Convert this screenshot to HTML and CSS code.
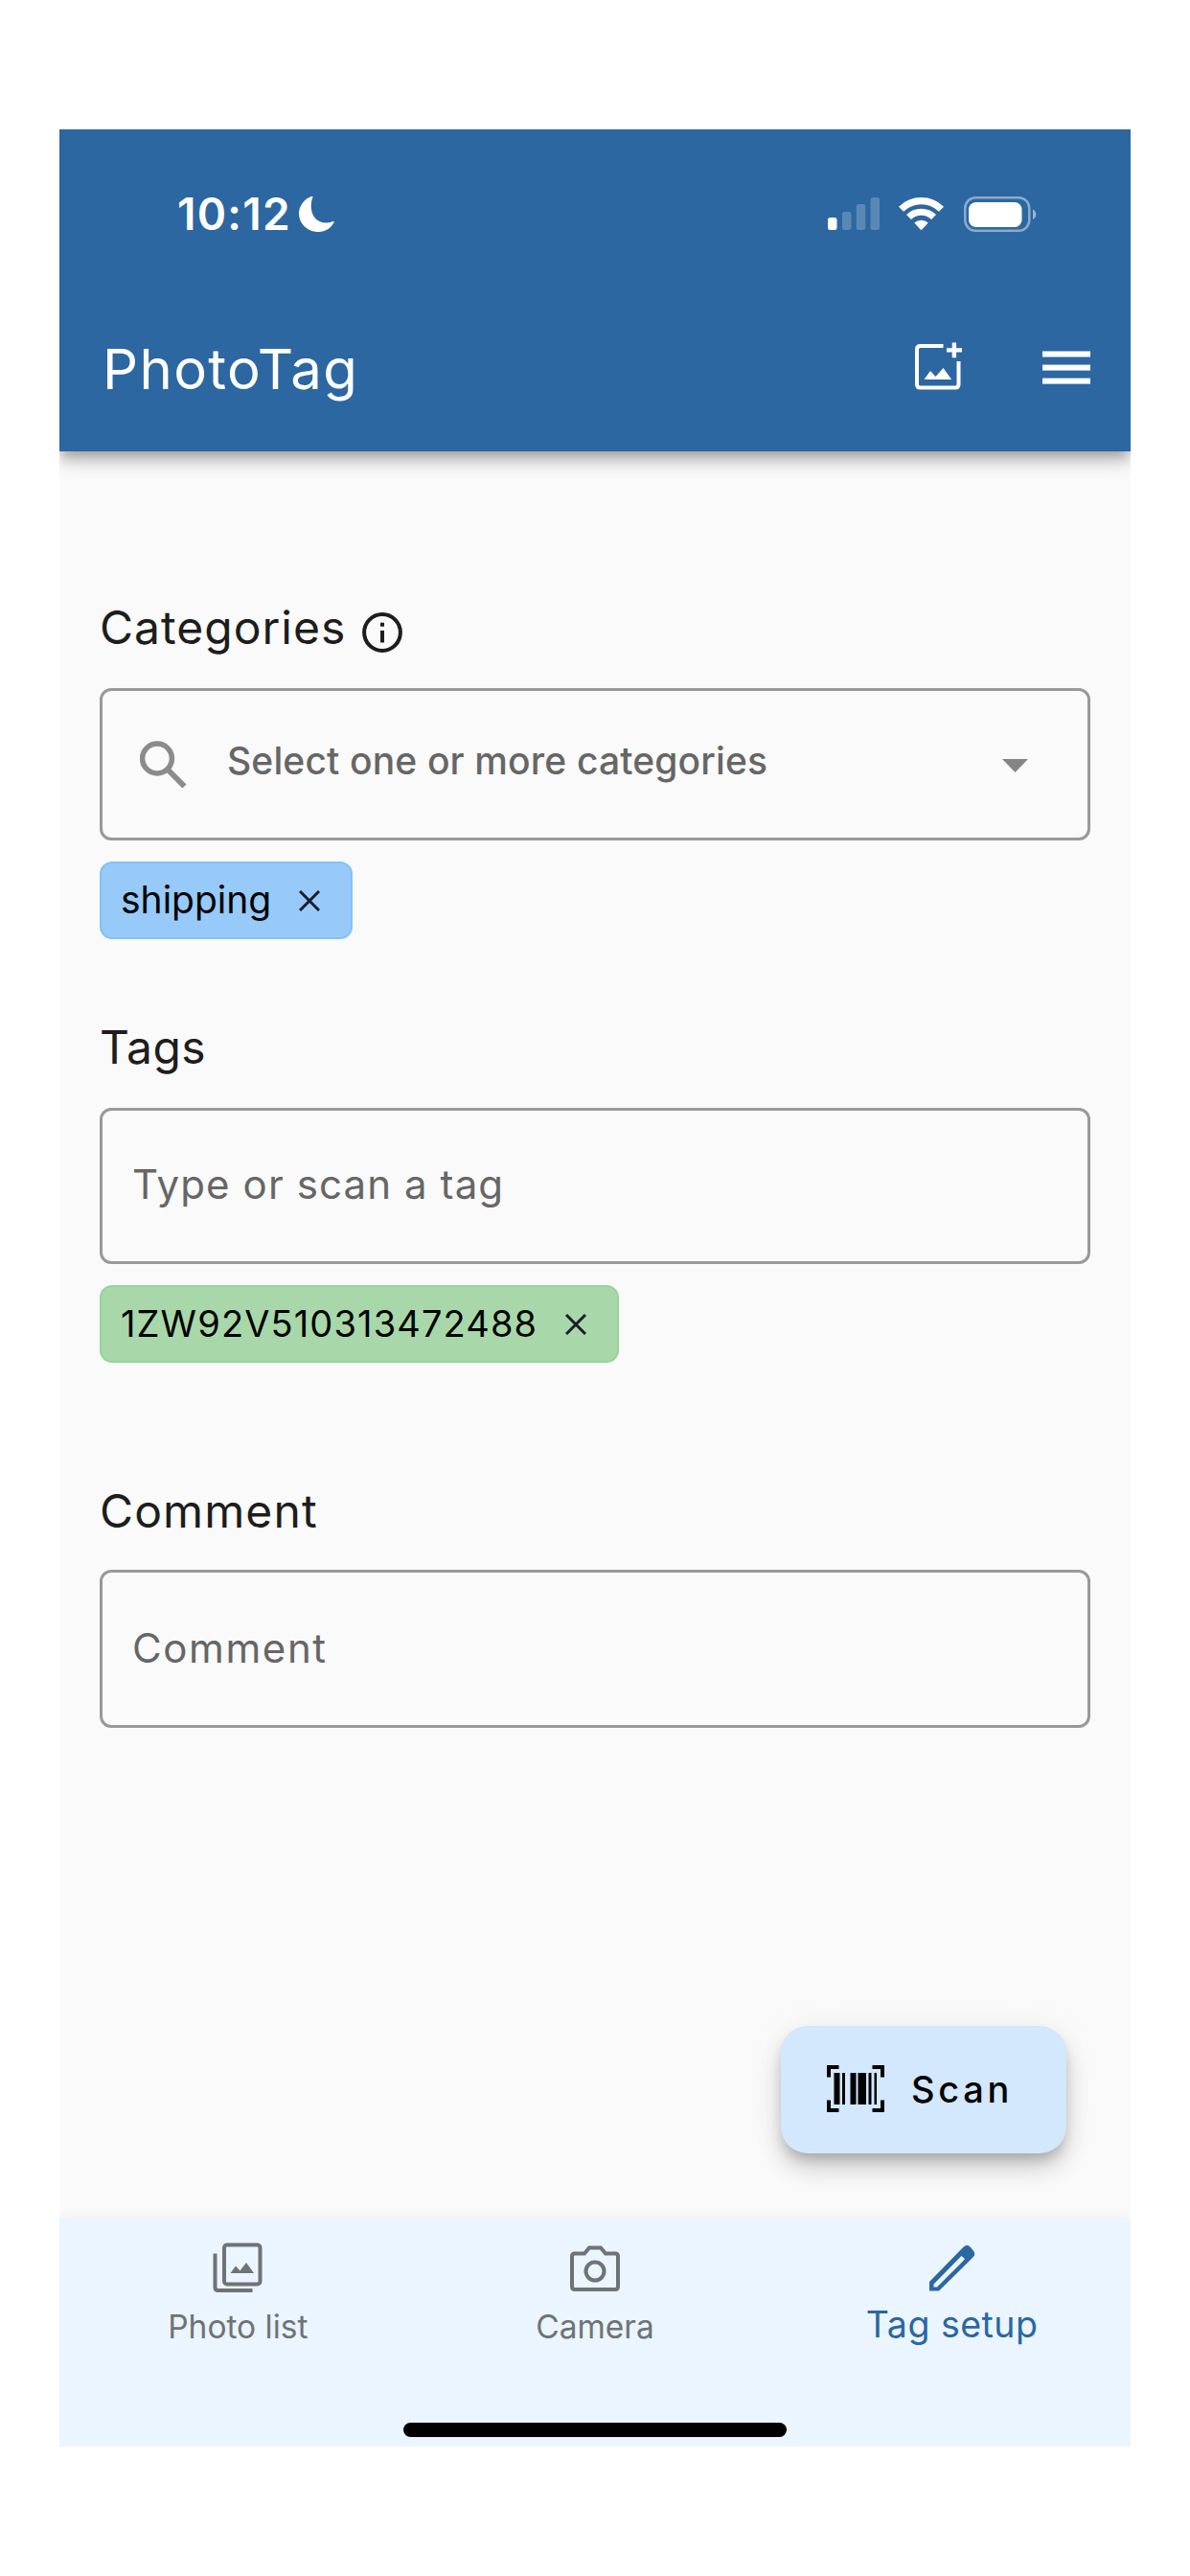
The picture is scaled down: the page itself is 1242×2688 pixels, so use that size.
FILE: index.html
```
<!DOCTYPE html>
<html lang="en">
<head>
    <meta charset="UTF-8">
    <meta name="viewport" content="width=device-width, initial-scale=1.0">
    <title>PhotoTag</title>
    <link rel="stylesheet" href="styles.css">
</head>
<body>
    <div class="phone">
        <header class="app-bar">
            <div class="status-bar">
                <span class="time">10:12</span>
                <svg class="moon" width="37" height="37" viewBox="0 0 37 37">
                    <path d="M14.5 0.6C10 11.5 13.5 27.5 29 27.5C31.5 27.5 33.8 27 35.6 26.1C36.3 25.7 37 26.2 36.600 27C33.6 32.8 27.7 37 20.5 37C9 37 0 28.5 0 17.5C0 10.2 5.5 2.8 12.8 0.1C13.9 -0.2 14.8 -0.2 14.5 0.6Z" fill="#fff"/>
                </svg>
                <div class="status-icons">
                    <svg width="54" height="34" viewBox="0 0 54 34" fill="#fff">
                        <rect x="0" y="21" width="9.5" height="13" rx="2.5"/>
                        <rect x="15" y="15" width="9.5" height="19" rx="2.5" opacity="0.22"/>
                        <rect x="29.7" y="7" width="9.5" height="27" rx="2.5" opacity="0.22"/>
                        <rect x="44.5" y="0" width="9.5" height="34" rx="2.5" opacity="0.22"/>
                    </svg>
                    <svg class="wifi" width="47" height="34" viewBox="0 0 47 34">
                        <path d="M2.5 12.3A30 30 0 0 1 44.5 12.3" fill="none" stroke="#fff" stroke-width="7.2"/>
                        <path d="M10.5 20.5A18.5 18.5 0 0 1 36.5 20.5" fill="none" stroke="#fff" stroke-width="7"/>
                        <path d="M16.3 26.6A10.5 10.5 0 0 1 30.7 26.6L24.3 33.4Q23.5 34.3 22.7 33.4Z" fill="#fff"/>
                    </svg>
                    <svg class="battery" width="76" height="37" viewBox="0 0 76 37">
                        <rect x="1.25" y="1.25" width="67" height="34.5" rx="11" fill="none" stroke="#fff" stroke-width="2.5" opacity="0.45"/>
                        <rect x="5" y="6" width="55.5" height="26" rx="7.5" fill="#fff"/>
                        <path d="M72 13.5C76.5 15.5 76.5 22 72 24Z" fill="#fff" opacity="0.5"/>
                    </svg>
                </div>
            </div>
            <div class="toolbar">
                <h1>PhotoTag</h1>
                <svg class="add-photo" width="50" height="70" viewBox="0 0 50 70" fill="none" stroke="#fff">
                    <path d="M29.5 11H5.5Q2 11 2 14.5V51Q2 54.5 5.5 54.5H42Q45.5 54.5 45.5 51V27" stroke-width="4"/>
                    <path d="M33 15.4H49M40.9 7.5V23.3" stroke-width="4.4"/>
                    <path d="M9.5 46L16 37L21.5 43L29.5 34L38.2 46Z" fill="#fff" stroke="none"/>
                </svg>
                <svg class="menu" width="50" height="70" viewBox="0 0 50 70" fill="#fff">
                    <rect y="16.5" width="50" height="6"/>
                    <rect y="30.6" width="50" height="6"/>
                    <rect y="44.6" width="50" height="6"/>
                </svg>
            </div>
        </header>

        <main>
            <section class="field categories">
                <h2>Categories
                    <svg class="info" width="42" height="42" viewBox="0 0 42 42">
                        <circle cx="21" cy="21" r="18.9" fill="none" stroke="#1d1d1d" stroke-width="4"/>
                        <path d="M21 19V31.5M21 10.8V14.8" stroke="#1d1d1d" stroke-width="4"/>
                    </svg>
                </h2>
                <div class="box select">
                    <svg width="49" height="49" viewBox="0 0 49 49" fill="none" stroke="#8b8b8b">
                        <circle cx="18" cy="18.5" r="15.4" stroke-width="5.5"/>
                        <path d="M29 30L46.5 47.5" stroke-width="5.8"/>
                    </svg>
                    <span>Select one or more categories</span>
                    <svg class="arrow" width="27" height="14" viewBox="0 0 27 14"><path d="M0 0H27L13.5 14Z" fill="#858585"/></svg>
                </div>
                <div class="chip blue">
                    <span>shipping</span>
                    <svg width="22" height="22" viewBox="0 0 22 22"><path d="M1 1L21 21M21 1L1 21" stroke="#1d1b2c" stroke-width="3"/></svg>
                </div>
            </section>

            <section class="field tags">
                <h2>Tags</h2>
                <input class="box" type="text" placeholder="Type or scan a tag">
                <div class="chip green">
                    <span>1ZW92V510313472488</span>
                    <svg width="22" height="22" viewBox="0 0 22 22"><path d="M1 1L21 21M21 1L1 21" stroke="#1d1b2c" stroke-width="3"/></svg>
                </div>
            </section>

            <section class="field comment">
                <h2>Comment</h2>
                <input class="box" type="text" placeholder="Comment">
            </section>
        </main>

        <button class="scan">
            <svg width="60" height="49" viewBox="0 0 60 49">
                <path d="M2 12.5V2H12.5M47.5 2H58V12.5M58 36.5V47H47.5M12.5 47H2V36.5" fill="none" stroke="#000" stroke-width="4"/>
                <path d="M7.5 8H13.5V41H7.5ZM16 8H19V41H16ZM24.5 8H30.5V41H24.5ZM32.5 8H41V41H32.5ZM43.5 8H46.5V41H43.5ZM49.5 8H52V41H49.5Z"/>
            </svg>
            <span>Scan</span>
        </button>

        <nav>
            <a class="tab">
                <svg width="52" height="54" viewBox="0 0 52 54" fill="none" stroke="#6f7376" stroke-width="4">
                    <rect x="12" y="3.5" width="37.5" height="41" rx="3"/>
                    <path d="M2.5 12.5V48Q2.5 51 5.5 51H41.5"/>
                    <path d="M18.5 33L24 25.5L28.5 30.5L35 22L43 33Z" fill="#6f7376" stroke="none"/>
                </svg>
                <span>Photo list</span>
            </a>
            <a class="tab">
                <svg width="54" height="54" viewBox="0 0 54 54" fill="none" stroke="#6f7376" stroke-width="4">
                    <path d="M6 12.5H16L21 6.5H33L38 12.5H48Q51 12.5 51 15.5V47Q51 50 48 50H6Q3 50 3 47V15.5Q3 12.5 6 12.5Z"/>
                    <circle cx="27" cy="31" r="9.5"/>
                </svg>
                <span>Camera</span>
            </a>
            <a class="tab active">
                <svg width="54" height="54" viewBox="0 0 54 54">
                    <path d="M3 51.5V42L38.5 5.800Q42 2.5 45.5 5.500L48.5 9Q52 13 48.5 16.5L13 51.5ZM7.5 47.5H11L36.5 22L40 18.200L38.500 16.700L36.500 15L7.5 44.5Z" fill="#2c67a1" fill-rule="evenodd"/>
                </svg>
                <span>Tag setup</span>
            </a>
            <div class="home-indicator"></div>
        </nav>
    </div>
</body>
</html>
```
FILE: styles.css
```
* {
    box-sizing: border-box;
}

body {
    margin: 0;
    padding: 135px 62px;
    height: 2688px;
    background-color: white;
    font-family: Inter, "Liberation Sans", sans-serif;
}

svg {
    display: block;
    flex-shrink: 0;
}

h1, h2 {
    margin: 0;
    font-weight: 400;
}

.phone {
    position: relative;
    display: flex;
    flex-direction: column;
    width: 1118px;
    height: 2418px;
    overflow: hidden;
    background-color: #fafafa;
}

/* top bar */
.app-bar {
    position: relative;
    height: 336px;
    padding-top: 58px;
    background-color: #2c67a1;
    color: white;
    box-shadow: 0 7px 11px -3px rgba(0,0,0,0.2), 0 12px 15px 0 rgba(0,0,0,0.15), 0 3px 27px rgba(0,0,0,0.1);
}

.status-bar {
    display: flex;
    align-items: center;
    height: 60px;
    padding: 0 98px 0 123px;
}

.time {
    font-size: 46px;
    font-weight: 600;
    line-height: 60px;
    letter-spacing: 1.27px;
}

.moon {
    margin-left: 8px;
}

.status-icons {
    display: flex;
    align-items: center;
    margin-left: auto;
}

.wifi {
    margin: 0 21px 0 20px;
}

.toolbar {
    display: flex;
    height: 70px;
    margin-top: 97px;
    padding: 0 42px 0 45px;
}

.toolbar h1 {
    flex: 1;
    font-size: 58px;
    line-height: 70px;
    letter-spacing: 1.4px;
}

.menu {
    margin-left: 83px;
}

/* form */
main {
    flex: 1;
    padding: 154px 42px 0;
}

.field h2 {
    display: flex;
    align-items: center;
    margin-bottom: 33px;
    font-size: 48px;
    line-height: 60px;
    letter-spacing: 1px;
    color: #1d1d1d;
}

.categories {
    margin-bottom: 83px;
}

.tags {
    margin-bottom: 125px;
}

.tags h2 {
    letter-spacing: 0.5px;
}

.info {
    margin: 10px 0 0 17px;
}

.box {
    display: block;
    width: 100%;
    height: 163px;
    border: 3px solid #999;
    border-radius: 12px;
    background: none;
}

input.box {
    padding: 0 31px 4px;
    font-family: inherit;
    font-size: 42px;
    letter-spacing: 1.1px;
}

.box::placeholder {
    color: #666;
    opacity: 1;
}

.comment h2 {
    margin-bottom: 31px;
    letter-spacing: 1.1px;
}

.comment input.box {
    height: 165px;
    padding-bottom: 2px;
    letter-spacing: 1.6px;
}

.select {
    display: flex;
    align-items: center;
    height: 159px;
    padding: 0 62px 0 39px;
    color: #666;
}

.select span {
    flex: 1;
    margin-left: 42px;
    padding-bottom: 9px;
    font-size: 39px;
    font-weight: 500;
    letter-spacing: 0.14px;
}

.arrow {
    margin-top: 3px;
}

.chip {
    display: inline-flex;
    align-items: center;
    height: 81px;
    margin-top: 22px;
    border: 2px solid;
    border-radius: 13px;
    padding: 0 32px 0 20px;
    font-size: 39px;
    vertical-align: top;
    color: #000;
}

.chip span {
    padding-bottom: 2px;
}

.chip svg {
    margin-left: 29px;
}

.blue {
    background-color: #97caf8;
    border-color: #82c2f8;
}

.green {
    background-color: #a8d8aa;
    border-color: #96d498;
    font-size: 38px;
    letter-spacing: 1.13px;
}

/* floating scan button */
.scan {
    position: absolute;
    right: 67px;
    bottom: 306px;
    display: flex;
    align-items: center;
    width: 298px;
    height: 133px;
    border: none;
    border-radius: 28px;
    padding: 0 0 2px 48px;
    background-color: #d3e7fd;
    color: #000;
    font-family: inherit;
    font-size: 38px;
    font-weight: 500;
    letter-spacing: 3.7px;
    box-shadow: 0 9px 13px -3px rgba(0,0,0,0.2), 0 17px 26px 0 rgba(0,0,0,0.14), 0 3px 40px rgba(0,0,0,0.06);
}

.scan span {
    margin-left: 28px;
}

/* bottom navigation */
nav {
    position: relative;
    display: flex;
    height: 239px;
    padding-top: 25px;
    background-color: #ebf5ff;
    box-shadow: 0 0 14px rgba(0,0,0,0.05);
}

.tab {
    flex: 1;
    display: flex;
    flex-direction: column;
    align-items: center;
    color: #6f7376;
    font-size: 33.5px;
    line-height: 46px;
}

.tab span {
    margin-top: 12px;
}

.active {
    color: #2c67a1;
    font-size: 37.5px;
    letter-spacing: 0.5px;
}

.active span {
    margin-top: 10px;
}

.home-indicator {
    position: absolute;
    left: 359px;
    bottom: 10px;
    width: 400px;
    height: 15px;
    border-radius: 8px;
    background-color: #000;
}
```
